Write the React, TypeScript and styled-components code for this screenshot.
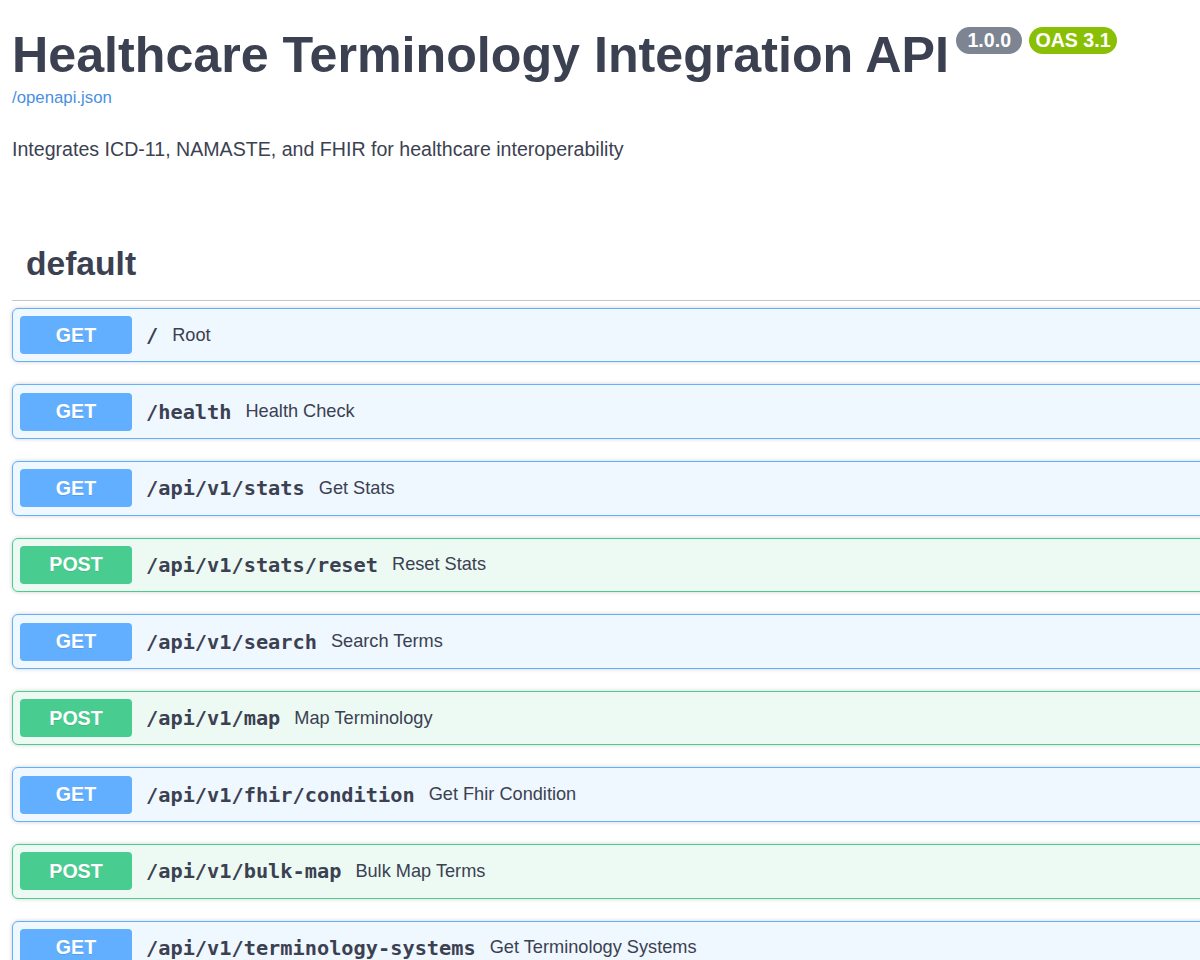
import styled, { createGlobalStyle } from "styled-components";

type Method = "GET" | "POST";

const operations: { method: Method; path: string; summary: string }[] = [
  { method: "GET", path: "/", summary: "Root" },
  { method: "GET", path: "/health", summary: "Health Check" },
  { method: "GET", path: "/api/v1/stats", summary: "Get Stats" },
  { method: "POST", path: "/api/v1/stats/reset", summary: "Reset Stats" },
  { method: "GET", path: "/api/v1/search", summary: "Search Terms" },
  { method: "POST", path: "/api/v1/map", summary: "Map Terminology" },
  { method: "GET", path: "/api/v1/fhir/condition", summary: "Get Fhir Condition" },
  { method: "POST", path: "/api/v1/bulk-map", summary: "Bulk Map Terms" },
  { method: "GET", path: "/api/v1/terminology-systems", summary: "Get Terminology Systems" },
];

const palette = {
  GET: { main: "#61affe", tint: "#eff7ff" },
  POST: { main: "#49cc90", tint: "#edfaf4" },
};

const App = () => {
  return (
    <>
      <GlobalStyle />
      <Page>
        <TitleRow>
          <Title>Healthcare Terminology Integration API</Title>
          <Badge $color="#7d8492">{" 1.0.0 "}</Badge>
          <Badge $color="#89bf04">OAS 3.1</Badge>
        </TitleRow>
        <SpecLink href="#">/openapi.json</SpecLink>
        <Description>
          Integrates ICD-11, NAMASTE, and FHIR for healthcare interoperability
        </Description>

        <TagHeader>default</TagHeader>

        <OpList>
          {operations.map((op) => (
            <OpBlock key={op.path} $method={op.method}>
              <MethodBadge $method={op.method}>{op.method}</MethodBadge>
              <OpPath>{op.path}</OpPath>
              <OpSummary>{op.summary}</OpSummary>
            </OpBlock>
          ))}
        </OpList>
      </Page>
    </>
  );
};

export default App;

const GlobalStyle = createGlobalStyle`
  html, body {
    margin: 0;
    padding: 0;
    background: #fff;
    overflow: hidden;
  }
  body {
    font-family: "Liberation Sans", Arial, sans-serif;
    color: #3b4151;
  }
`;

const Page = styled.div`
  width: 1230px;
  padding-left: 12px;
  display: flex;
  flex-direction: column;
`;

const TitleRow = styled.div`
  display: flex;
  align-items: flex-start;
  margin-top: 25.5px;
`;

const Title = styled.h2`
  margin: 0;
  font-size: 50.2px;
  line-height: 58px;
  font-weight: 700;
  color: #3b4151;
  white-space: nowrap;
`;

const Badge = styled.span<{ $color: string }>`
  margin: 1.5px 0 0 7px;
  height: 27px;
  line-height: 27px;
  padding: 0 6px;
  border-radius: 80px;
  background: ${(p) => p.$color};
  color: #fff;
  font-size: 19.6px;
  font-weight: 700;
  white-space: pre;
`;

const SpecLink = styled.a`
  margin-top: 4.7px;
  font-size: 16.8px;
  line-height: 20px;
  color: #4990e2;
  text-decoration: none;
  align-self: flex-start;
`;

const Description = styled.p`
  margin: 29px 0 0;
  font-size: 19.6px;
  line-height: 24px;
  color: #3b4151;
`;

const TagHeader = styled.h3`
  margin: 83px 0 0;
  padding: 0 0 15.7px 14px;
  font-size: 33.6px;
  line-height: 40px;
  font-weight: 700;
  color: #3b4151;
  border-bottom: 1px solid rgba(59, 65, 81, 0.3);
`;

const OpList = styled.div`
  display: flex;
  flex-direction: column;
  gap: 22px;
  margin-top: 7px;
`;

const OpBlock = styled.div<{ $method: Method }>`
  box-sizing: border-box;
  height: 54.6px;
  display: flex;
  align-items: center;
  padding: 0 7px;
  border: 1px solid ${(p) => palette[p.$method].main};
  background: ${(p) => palette[p.$method].tint};
  border-radius: 6px;
  box-shadow: 0 0 4px rgba(0, 0, 0, 0.19);
`;

const MethodBadge = styled.span<{ $method: Method }>`
  width: 112px;
  height: 38px;
  display: flex;
  align-items: center;
  justify-content: center;
  border-radius: 4px;
  background: ${(p) => palette[p.$method].main};
  color: #fff;
  font-size: 19.6px;
  font-weight: 700;
  text-shadow: 0 1px 0 rgba(0, 0, 0, 0.1);
`;

const OpPath = styled.span`
  padding: 0 14px;
  font-family: "DejaVu Sans Mono", "Liberation Mono", monospace;
  font-size: 20.3px;
  font-weight: 700;
  color: #3b4151;
`;

const OpSummary = styled.span`
  font-size: 18.2px;
  color: #3b4151;
`;
